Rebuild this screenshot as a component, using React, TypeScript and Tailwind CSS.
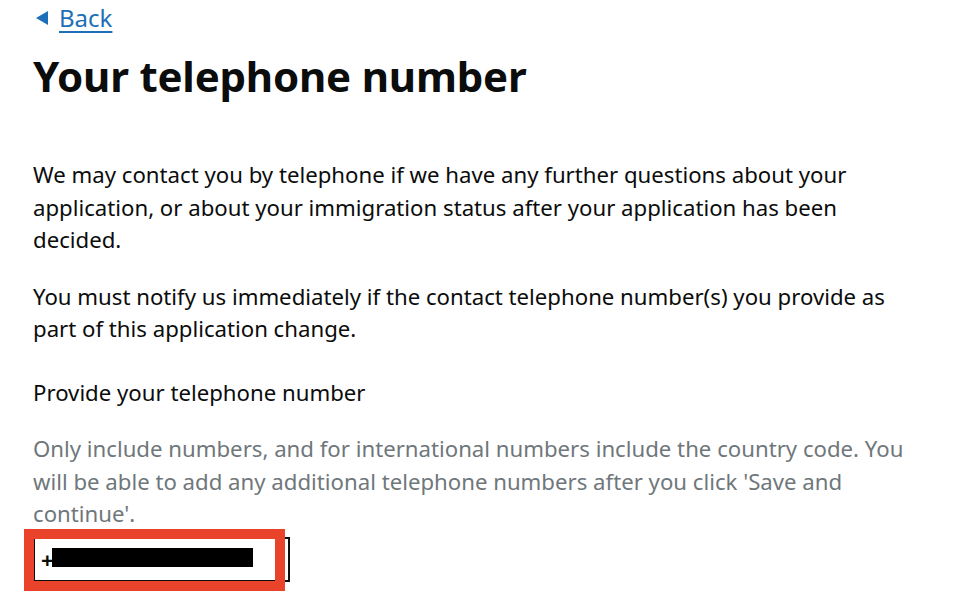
import React from "react";

export default function App() {
  return (
    <div
      className="min-h-[612px] w-[966px] bg-white text-[#0b0c0c]"
      style={{ fontFamily: '"Noto Sans", Arial, sans-serif' }}
    >
      <div className="pl-[33px] w-[920px]">
        <div className="pt-[2px] h-[34px] flex items-center">
          <a href="#" className="flex items-center text-[#1d70b8] text-[24px] leading-[28px]">
            <span className="mr-[11px] ml-[3px] inline-block w-0 h-0 border-y-[7px] border-y-transparent border-r-[12px] border-r-[#1d70b8]" />
            <span className="underline underline-offset-[4px] decoration-[1.5px]">Back</span>
          </a>
        </div>
        <h1 className="mt-[18px] text-[42px] leading-[48px] font-bold tracking-[-0.2px]">
          Your telephone number
        </h1>
        <div className="mt-[59px] text-[22.2px] leading-[32.5px]">
          <p>
            We may contact you by telephone if we have any further questions about your application,
            or about your immigration status after your application has been decided.
          </p>
          <p className="mt-[24px]">
            You must notify us immediately if the contact telephone number(s) you provide as part of
            this application change.
          </p>
          <label className="block mt-[31px]">Provide your telephone number</label>
          <p className="mt-[24px] text-[#6f777b]">
            Only include numbers, and for international numbers include the country code. You will
            be able to add any additional telephone numbers after you click 'Save and continue'.
          </p>
        </div>
        <div className="relative mt-[6px] w-[257px] h-[45px] border-2 border-[#0b0c0c] bg-white">
          <div className="absolute left-[6px] top-[9px] text-[22px] leading-[22px] font-bold">+</div>
          <div className="absolute left-[17px] top-[9px] w-[201px] h-[19px] bg-black" />
          <div className="absolute left-[-11px] top-[-10px] w-[261px] h-[62px] border-[10px] border-[#e9442b]" />
        </div>
      </div>
    </div>
  );
}
